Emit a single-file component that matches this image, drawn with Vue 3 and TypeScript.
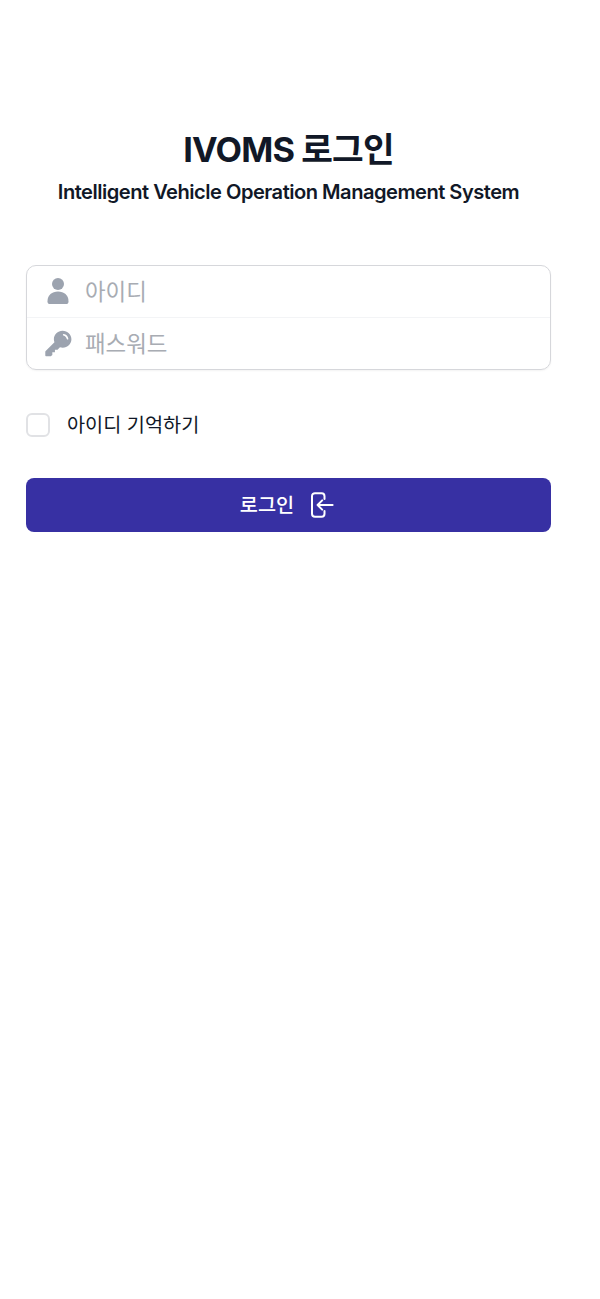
<script setup lang="ts">
import { ref } from 'vue'

const userId = ref<string>('')
const password = ref<string>('')
const remember = ref<boolean>(false)
</script>

<template>
  <main class="page">
    <header class="head">
      <h1 class="title">IVOMS 로그인</h1>
      <p class="subtitle">Intelligent Vehicle Operation Management System</p>
    </header>

    <form class="form" @submit.prevent>
      <div class="fields">
        <label class="field">
          <span class="icon-slot">
            <svg width="24" height="28" viewBox="0 0 24 28" fill="#9ca3af" aria-hidden="true">
              <circle cx="12" cy="7" r="6" />
              <path d="M1.5 24.5C1.5 18 6 14.6 12 14.6S22.5 18 22.5 24.5C22.5 26.5 21.5 27 20 27H4C2.5 27 1.5 26.5 1.5 24.5Z" />
            </svg>
          </span>
          <input v-model="userId" class="input" type="text" placeholder="아이디" />
        </label>
        <label class="field field-second">
          <span class="icon-slot">
            <svg class="key" width="27" height="27" viewBox="0 0 28 27" aria-hidden="true">
              <path fill="#9ca3af" d="M18.2 0.3C23.4 0.3 27.4 4.3 27.4 9.2C27.4 14.2 23.2 18 18.4 18C17.4 18 16.4 17.8 15.5 17.5L13 20H10.3V22.7H7.6V25.4L6 26.7H1.4C0.7 26.7 0.3 26.2 0.3 25.6V22.2C0.3 21.8 0.5 21.5 0.7 21.3L9.8 12.3C9.4 11.3 9.2 10.3 9.2 9.2C9.2 4.3 13.2 0.3 18.2 0.3Z" />
              <path fill="#ffffff" d="M19.4 3.6C22 3.9 23.9 5.8 24.2 8.6C24.3 9.6 22.9 9.8 22.6 8.9C22 7.1 20.9 6 19.1 5.3C18.2 4.9 18.4 3.5 19.4 3.6Z" />
            </svg>
          </span>
          <input v-model="password" class="input" type="password" placeholder="패스워드" />
        </label>
      </div>

      <label class="remember">
        <input v-model="remember" class="check" type="checkbox" />
        <span class="remember-text">아이디 기억하기</span>
      </label>

      <button class="submit" type="submit">
        <span>로그인</span>
        <svg width="24" height="26" viewBox="0 0 24 26" fill="none" stroke="#ffffff" stroke-width="2" stroke-linecap="round" stroke-linejoin="round" aria-hidden="true">
          <path d="M14.5 7V4.2C14.5 2.4 13.4 1.3 11.6 1.3H5C3.2 1.3 2 2.4 2 4.2V21.8C2 23.6 3.2 24.7 5 24.7H11.6C13.4 24.7 14.5 23.6 14.5 21.8V19" />
          <path d="M22.6 13H7.6M7.6 13L12.2 8.4M7.6 13L12.2 17.6" />
        </svg>
      </button>
    </form>
  </main>
</template>

<style scoped>
.page {
  box-sizing: border-box;
  width: 577px;
  padding: 128px 26px 0;
  font-family: Inter, "Noto Sans CJK KR", sans-serif;
}
.head {
  text-align: center;
}
.title {
  margin: 0;
  font-size: 34.4px;
  line-height: 44px;
  font-weight: 700;
  letter-spacing: -0.86px;
  color: #111827;
}
.subtitle {
  margin: 6px 0 0;
  font-size: 20.1px;
  line-height: 28px;
  font-weight: 600;
  letter-spacing: -0.5px;
  color: #111827;
}
.form {
  display: flex;
  flex-direction: column;
  margin-top: 59px;
}
.fields {
  display: flex;
  flex-direction: column;
  border: 1.5px solid #d6d7db;
  border-radius: 10px;
  box-shadow: 0 1px 2px rgba(0, 0, 0, 0.05);
}
.field {
  display: flex;
  align-items: center;
  gap: 12px;
  height: 51px;
  padding: 0 16px;
}
.field-second {
  border-top: 1px solid #f3f4f6;
}
.icon-slot {
  display: flex;
  justify-content: center;
  align-items: center;
  width: 30px;
  flex: none;
  margin-top: -1px;
}
.key {
  margin-left: 1px;
}
.input {
  flex: 1;
  min-width: 0;
  border: 0;
  outline: 0;
  padding: 0;
  margin-top: 1px;
  background: transparent;
  font: 400 22.4px/32px Inter, "Noto Sans CJK KR", sans-serif;
  color: #111827;
}
.input::placeholder {
  color: #a8acb3;
  opacity: 1;
}
.remember {
  display: flex;
  align-items: center;
  gap: 17px;
  margin-top: 40.5px;
}
.check {
  appearance: none;
  box-sizing: border-box;
  width: 24px;
  height: 24px;
  margin: 0;
  border: 2px solid #e1e2e5;
  border-radius: 6px;
  background: #fff;
  flex: none;
}
.remember-text {
  font-size: 19.7px;
  line-height: 28px;
  color: #111827;
}
.submit {
  display: flex;
  justify-content: center;
  align-items: center;
  gap: 16px;
  height: 54px;
  margin-top: 39.5px;
  padding: 0 3px 0 0;
  border: 0;
  border-radius: 8px;
  background: #3730a3;
  color: #fff;
  font: 500 19.7px/28px Inter, "Noto Sans CJK KR", sans-serif;
}
</style>
